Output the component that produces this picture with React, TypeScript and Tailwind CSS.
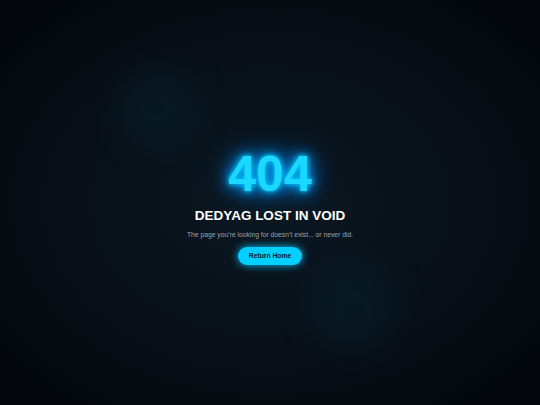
import React from 'react';

const App: React.FC = () => {
    return (
        <div
            className="relative w-full h-[405px] overflow-hidden bg-[radial-gradient(ellipse_at_center,#0b1822_0%,#070e16_55%,#03060a_100%)]"
            style={{ fontFamily: '"Liberation Sans", Arial, sans-serif' }}
        >
            {/* faint floating orbs */}
            <div className="absolute left-[115px] top-[65px] w-[85px] h-[85px] rounded-full bg-[#0b2c3a] opacity-30 blur-[16px]" />
            <div className="absolute left-[308px] top-[262px] w-[90px] h-[90px] rounded-full bg-[#0b2c3a] opacity-30 blur-[16px]" />

            <div className="relative flex flex-col items-center justify-center h-full pt-[9px]">
                <h1 className="text-[50px] leading-none font-bold text-[#1ad8ff] [text-shadow:0_0_4px_#00ccff,0_0_10px_#00b4ff,0_0_18px_#0098ff,0_0_28px_#0080ff]">
                    404
                </h1>
                <h2 className="mt-[10px] text-[13.5px] leading-none font-bold text-white">DEDYAG LOST IN VOID</h2>
                <p className="mt-[9px] text-[6.75px] leading-none text-[#9aa3ad]">
                    The page you&#8217;re looking for doesn&#8217;t exist... or never did.
                </p>
                <button className="mt-[8px] h-[18px] px-[11px] rounded-full bg-[#00cfff] text-[6.75px] font-bold text-[#0a1a2a] shadow-[0_0_8px_#00bfff]">
                    Return Home
                </button>
            </div>
        </div>
    );
};

export default App;
